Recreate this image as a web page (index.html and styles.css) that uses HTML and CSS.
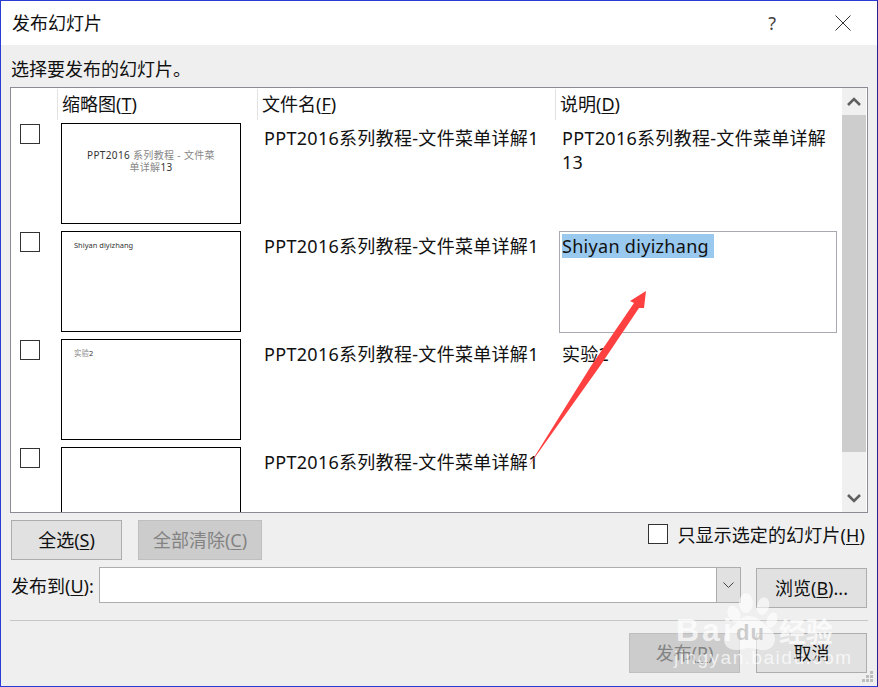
FILE: index.html
```html
<!DOCTYPE html>
<html lang="zh-CN">
<head>
<meta charset="utf-8">
<title>发布幻灯片</title>
<link rel="stylesheet" href="styles.css">
</head>
<body>
<div class="window">
  <header class="titlebar">
    <span class="title">发布幻灯片</span>
    <span class="help">?</span>
    <svg class="close" width="16" height="16" viewBox="0 0 16 16"><path d="M.5.5l15 15M15.500.5l-15 15" fill="none" stroke="#333" stroke-width="1"/></svg>
  </header>
  <main class="content">
    <div class="prompt">选择要发布的幻灯片。</div>
    <section class="list">
      <div class="list-main">
        <div class="grid head">
          <div class="hcell"></div>
          <div class="hcell sep">缩略图(<u>T</u>)</div>
          <div class="hcell sep">文件名(<u>F</u>)</div>
          <div class="hcell sep">说明(<u>D</u>)</div>
        </div>
        <div class="rows">
          <div class="grid row">
            <div class="check-cell"><span class="check"></span></div>
            <div class="thumb-cell"><div class="thumb center">PPT2016 <span class="faint">系列教程 - 文件菜<br>单详解</span>13</div></div>
            <div class="file">PPT2016系列教程-文件菜单详解1</div>
            <div class="desc">PPT2016系列教程-文件菜单详解13</div>
          </div>
          <div class="grid row">
            <div class="check-cell"><span class="check"></span></div>
            <div class="thumb-cell"><div class="thumb left">Shiyan diyizhang</div></div>
            <div class="file">PPT2016系列教程-文件菜单详解1</div>
            <div class="desc-edit"><div class="editbox"><span class="selected">Shiyan diyizhang&nbsp;</span></div></div>
          </div>
          <div class="grid row">
            <div class="check-cell"><span class="check"></span></div>
            <div class="thumb-cell"><div class="thumb left"><span class="faint">实验</span>2</div></div>
            <div class="file">PPT2016系列教程-文件菜单详解1</div>
            <div class="desc">实验2</div>
          </div>
          <div class="grid row">
            <div class="check-cell"><span class="check"></span></div>
            <div class="thumb-cell"><div class="thumb"></div></div>
            <div class="file">PPT2016系列教程-文件菜单详解1</div>
            <div class="desc"></div>
          </div>
        </div>
      </div>
      <div class="scrollbar">
        <div class="sb-btn"><svg width="14" height="9" viewBox="0 0 14 9"><path d="M1 8l6-6 6 6" fill="none" stroke="#606060" stroke-width="2.600"/></svg></div>
        <div class="sb-thumb"></div>
        <div class="sb-track"></div>
        <div class="sb-btn"><svg width="14" height="9" viewBox="0 0 14 9"><path d="M1 1l6 6 6-6" fill="none" stroke="#606060" stroke-width="2.600"/></svg></div>
      </div>
    </section>
    <div class="select-row">
      <button class="btn select-all">全选(<u>S</u>)</button>
      <button class="btn clear-all" disabled>全部清除(<u>C</u>)</button>
      <label class="only-selected"><span class="check"></span><span>只显示选定的幻灯片(<u>H</u>)</span></label>
    </div>
    <div class="publish-row">
      <span class="publish-label">发布到(<u>U</u>):</span>
      <div class="combo">
        <div class="combo-input"></div>
        <div class="combo-btn"><svg width="11" height="6" viewBox="0 0 11 6"><path d="M.5.500l5 5 5-5" fill="none" stroke="#444" stroke-width="1"/></svg></div>
      </div>
      <button class="btn browse">浏览(<u>B</u>)...</button>
    </div>
    <hr class="divider">
    <div class="action-row">
      <button class="btn publish" disabled>发布(<u>P</u>)</button>
      <button class="btn cancel">取消</button>
    </div>
  </main>
  <svg class="grip" width="12" height="12" viewBox="0 0 12 12"><path d="M8 0h3v3H8zM4 4h3v3H4zM8 4h3v3H8zM0 8h3v3H0zM4 8h3v3H4zM8 8h3v3H8z" fill="#bdbdbd"/></svg>
  <svg class="arrow" width="130" height="190" viewBox="0 0 130 190"><path d="M1 179L64 78 107 15 103 13 119 3 117 20 112 20 73 78Z" fill="#fe4040"/></svg>
  <div class="watermark">
    <svg class="paw" width="90" height="64" viewBox="0 0 90 64"><g fill="#fff" fill-opacity=".6"><ellipse cx="33" cy="24" rx="6" ry="9" transform="rotate(-25 33 24)"/><ellipse cx="45" cy="13" rx="7" ry="10"/><ellipse cx="62" cy="16" rx="6" ry="9" transform="rotate(15 62 16)"/><ellipse cx="71" cy="30" rx="5" ry="8" transform="rotate(20 71 30)"/><path d="M48 26c9 0 12 6 18 10 5 4 8 8 8 13 0 8-7 12-14 11-5-1-8-2-12-2s-7 2-13 2c-7 0-12-4-12-11 0-6 4-9 9-13 6-4 7-10 16-10z"/></g></svg>
    <span class="wm-bai">Bai</span><span class="wm-du">du</span><span class="wm-cn">经验</span>
    <span class="wm-url">jingyan.baidu.com</span>
  </div>
</div>
</body>
</html>
```
FILE: styles.css
```css
* { box-sizing: border-box; }
html, body { margin: 0; padding: 0; }
body { width: 878px; height: 687px; overflow: hidden; font-family: "Noto Sans", "Noto Sans CJK SC", sans-serif; font-size: 18px; color: #111; }
u { text-underline-offset: 2px; text-decoration-thickness: 1px; }

.window { position: relative; width: 878px; height: 687px; background: #efefef; border: 1px solid #2a3bd6; border-right-color: #24248f; overflow: hidden; display: flex; flex-direction: column; }

.titlebar { height: 44px; flex: none; background: #fff; display: flex; align-items: center; padding: 0 26px 0 11px; }
.title { font-size: 18px; line-height: 24px; flex: 1; margin-top: -1px; }
.help { font-size: 18px; line-height: 24px; color: #444; margin-right: 59px; margin-top: -1px; }
.close { display: block; margin-top: 0; }

.content { flex: 1; display: flex; flex-direction: column; padding: 0 9px 0 9px; }
.prompt { height: 42px; line-height: 24px; padding: 12px 0 0 1px; font-size: 18px; flex: none; }

.list { height: 426px; flex: none; display: flex; background: #fff; border: 1px solid #8b8b96; overflow: hidden; width: 858px; }
.list-main { width: 829px; flex: none; overflow: hidden; }
.grid { display: grid; grid-template-columns: 46px 200px 298px 285px; }
.head { height: 35px; padding-top: 1px; }
.hcell { height: 31px; line-height: 31px; font-size: 18px; padding-left: 4px; }
.sep { border-left: 1px solid #e2e2e2; }
.row { height: 108px; }
.check-cell { padding: 1px 0 0 9px; }
.check { display: block; width: 20px; height: 20px; background: #fff; border: 1px solid #333; flex: none; }
.thumb-cell { padding-left: 4px; }
.thumb { width: 180px; height: 101px; background: #fff; border: 1px solid #000; font-size: 10px; line-height: 12px; color: #333; }
.thumb.center { text-align: center; padding-top: 25px; letter-spacing: .35px; }
.thumb.left { padding: 7px 12px; font-size: 7.500px; }
.faint { color: #888; }
.file { padding: 3px 0 0 7px; line-height: 24px; white-space: nowrap; letter-spacing: .3px; }
.desc { padding: 3px 0 0 7px; line-height: 24px; width: 276px; letter-spacing: .3px; }
.desc-edit { padding-left: 4px; }
.editbox { width: 278px; height: 102px; background: #fff; border: 1px solid #a9a9b0; padding: 2px; line-height: 24px; letter-spacing: .3px; }
.selected { display: inline-block; background: #99c9ef; height: 24px; line-height: 24px; }

.scrollbar { width: 24px; margin-left: 2px; flex: none; display: flex; flex-direction: column; background: #f0f0f0; }
.sb-btn { height: 27px; display: flex; align-items: center; justify-content: center; background: #f0f0f0; flex: none; }
.sb-thumb { height: 337px; background: #cdcdcd; flex: none; }
.sb-track { flex: 1; }

.btn { font-family: inherit; font-size: 18px; height: 40px; padding: 0; background: #e1e1e1; border: 1px solid #adadad; color: #111; line-height: 24px; flex: none; }
.btn:disabled { background: #ccc; border-color: #bfbfbf; color: #838383; }

.select-row { display: flex; align-items: flex-start; margin-top: 7px; height: 47px; flex: none; padding-left: 1px; }
.select-all { width: 111px; }
.clear-all { width: 124px; margin-left: 16px; }
.only-selected { margin-left: auto; display: flex; align-items: center; gap: 9px; height: 24px; margin-top: 2px; margin-right: 3px; letter-spacing: .12px; }

.publish-row { display: flex; align-items: flex-start; flex: none; height: 53px; padding-left: 1px; }
.publish-label { width: 88px; line-height: 24px; padding-top: 7px; white-space: nowrap; flex: none; }
.combo { width: 642px; height: 36px; display: flex; border: 1px solid #adadad; background: #fff; flex: none; }
.combo-input { flex: 1; }
.combo-btn { width: 24px; background: #e1e1e1; border-left: 1px solid #adadad; display: flex; align-items: center; justify-content: center; }
.browse { width: 111px; margin-left: 15px; margin-top: 1px; }

.divider { margin: 0; height: 1px; border: 0; background: #c6c6c6; width: 858px; flex: none; }
.action-row { display: flex; justify-content: flex-end; gap: 16px; margin-top: 12px; padding-right: 1px; }
.publish, .cancel { width: 111px; }

.grip { position: absolute; right: 3px; bottom: 3px; }
.arrow { position: absolute; left: 526px; top: 287px; }

.watermark { position: absolute; left: 672px; top: 589px; width: 175px; height: 85px; color: rgba(255,255,255,.72); font-family: "Liberation Sans", sans-serif; pointer-events: none; }
.paw { position: absolute; left: 28px; top: 0; }
.wm-bai { position: absolute; left: 3px; top: 22px; font-size: 32px; line-height: 36px; font-weight: 700; letter-spacing: 3px; }
.wm-du { position: absolute; left: 63px; top: 30px; font-size: 22px; line-height: 26px; font-weight: 700; letter-spacing: 1px; color: rgba(190,190,190,.75); }
.wm-cn { position: absolute; left: 106px; top: 25px; font-family: "Noto Sans CJK SC", sans-serif; font-size: 27px; line-height: 32px; font-weight: 700; white-space: nowrap; }
.wm-url { position: absolute; left: 1px; top: 56px; font-size: 19px; line-height: 24px; letter-spacing: 1.500px; white-space: nowrap; }
```
